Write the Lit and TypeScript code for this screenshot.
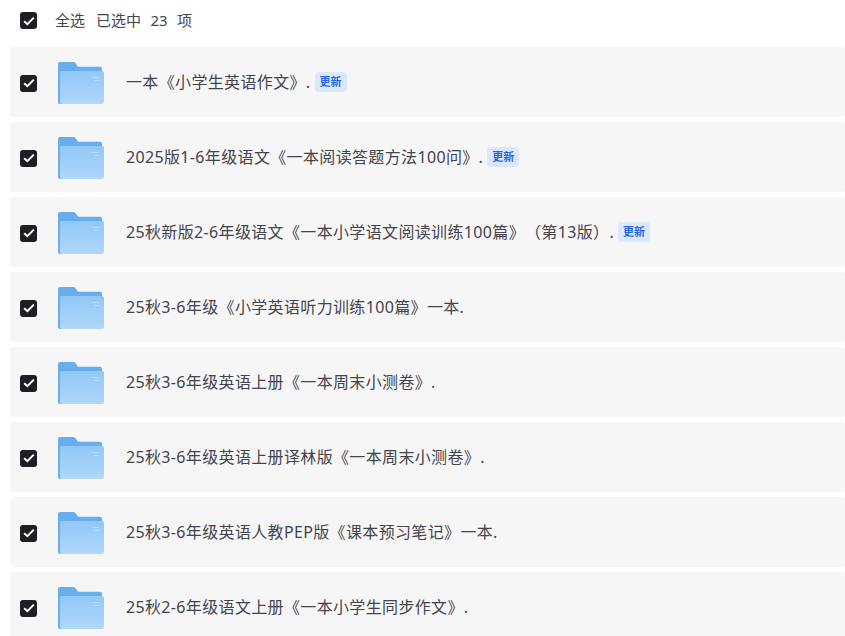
import { LitElement, html, css, svg } from "lit";
import { customElement } from "lit/decorators.js";

interface Item {
	name: string;
	updated?: boolean;
}

const ITEMS: Item[] = [
	{ name: "一本《小学生英语作文》.", updated: true },
	{ name: "2025版1-6年级语文《一本阅读答题方法100问》.", updated: true },
	{ name: "25秋新版2-6年级语文《一本小学语文阅读训练100篇》（第13版）.", updated: true },
	{ name: "25秋3-6年级《小学英语听力训练100篇》一本." },
	{ name: "25秋3-6年级英语上册《一本周末小测卷》." },
	{ name: "25秋3-6年级英语上册译林版《一本周末小测卷》." },
	{ name: "25秋3-6年级英语人教PEP版《课本预习笔记》一本." },
	{ name: "25秋2-6年级语文上册《一本小学生同步作文》." },
];

const check = html`<span class="check">
	<svg width="12" height="10" viewBox="0 0 12 10">
		<path d="M1.2 5.2 4.4 8.2 10.8 1.6" fill="none" stroke="#fff" stroke-width="2" />
	</svg>
</span>`;

const folder = svg`<svg class="folder" width="46" height="42" viewBox="0 0 46 42">
	<defs>
		<linearGradient id="front" x1="0" y1="0" x2="0" y2="1">
			<stop offset="0" stop-color="#92c8f7" />
			<stop offset="0.8" stop-color="#a8d3f9" />
			<stop offset="1" stop-color="#b3d9fa" />
		</linearGradient>
	</defs>
	<path d="M0 2a2 2 0 0 1 2-2h13c1.500 0 2.500 .8 3.200 2l1 1.800c.4 .7 1 1 1.800 1H42a2 2 0 0 1 2 2V41a1 1 0 0 1-1 1H2a2 2 0 0 1-2-2Z" fill="#66aeee" />
	<path d="M3.500 9H44a2 2 0 0 1 2 2v29a2 2 0 0 1-2 2H4a2 2 0 0 1-2-2V10.500A1.500 1.500 0 0 1 3.500 9Z" fill="url(#front)" />
	<rect x="34" y="15" width="7" height="1" fill="#b6daf9" />
	<rect x="36" y="18" width="5" height="1" fill="#b6daf9" />
</svg>`;

@customElement("app-root")
export class AppRoot extends LitElement {
	static styles = css`
		:host {
			display: block;
			height: 636px;
			overflow: hidden;
			background: #fff;
			font-family: "Noto Sans", "Noto Sans CJK SC", sans-serif;
			color: #44444c;
			text-spacing-trim: space-all;
		}

		.head {
			display: flex;
			align-items: center;
			height: 41px;
			padding-left: 20px;
			font-size: 15px;
		}

		.head .label {
			margin: 0 11px 2px 18px;
		}

		.head .count {
			margin-bottom: 2px;
			word-spacing: 5.500px;
		}

		.list {
			display: flex;
			flex-direction: column;
			gap: 5px;
			margin: 6px 0 0 10px;
			width: 835px;
		}

		.row {
			display: flex;
			align-items: center;
			flex: none;
			height: 70px;
			padding-left: 10px;
			background: #f6f6f7;
			border-radius: 3px;
		}

		.row .check {
			margin-top: 2px;
		}

		.check {
			display: flex;
			align-items: center;
			justify-content: center;
			flex: none;
			width: 17px;
			height: 17px;
			background: #1e1f24;
			border-radius: 3px;
		}

		.folder {
			flex: none;
			margin: 2px 22px 0 21px;
		}

		.name {
			margin-bottom: 2px;
			font-size: 16px;
			letter-spacing: 0.350px;
			white-space: nowrap;
		}

		.tag {
			margin-left: 4px;
			padding: 0 5px;
			height: 20px;
			line-height: 20px;
			font-size: 11px;
			font-weight: 700;
			color: #2468e0;
			background: #dbe7fd;
			border-radius: 4px;
		}
	`;

	render() {
		return html`
			<div class="head">
				${check}
				<span class="label">全选</span>
				<span class="count">已选中 23 项</span>
			</div>
			<div class="list">
				${ITEMS.map(
					(item) => html`
						<div class="row">
							${check} ${folder}
							<span class="name">${item.name}</span>
							${item.updated ? html`<span class="tag">更新</span>` : null}
						</div>
					`,
				)}
			</div>
		`;
	}
}
